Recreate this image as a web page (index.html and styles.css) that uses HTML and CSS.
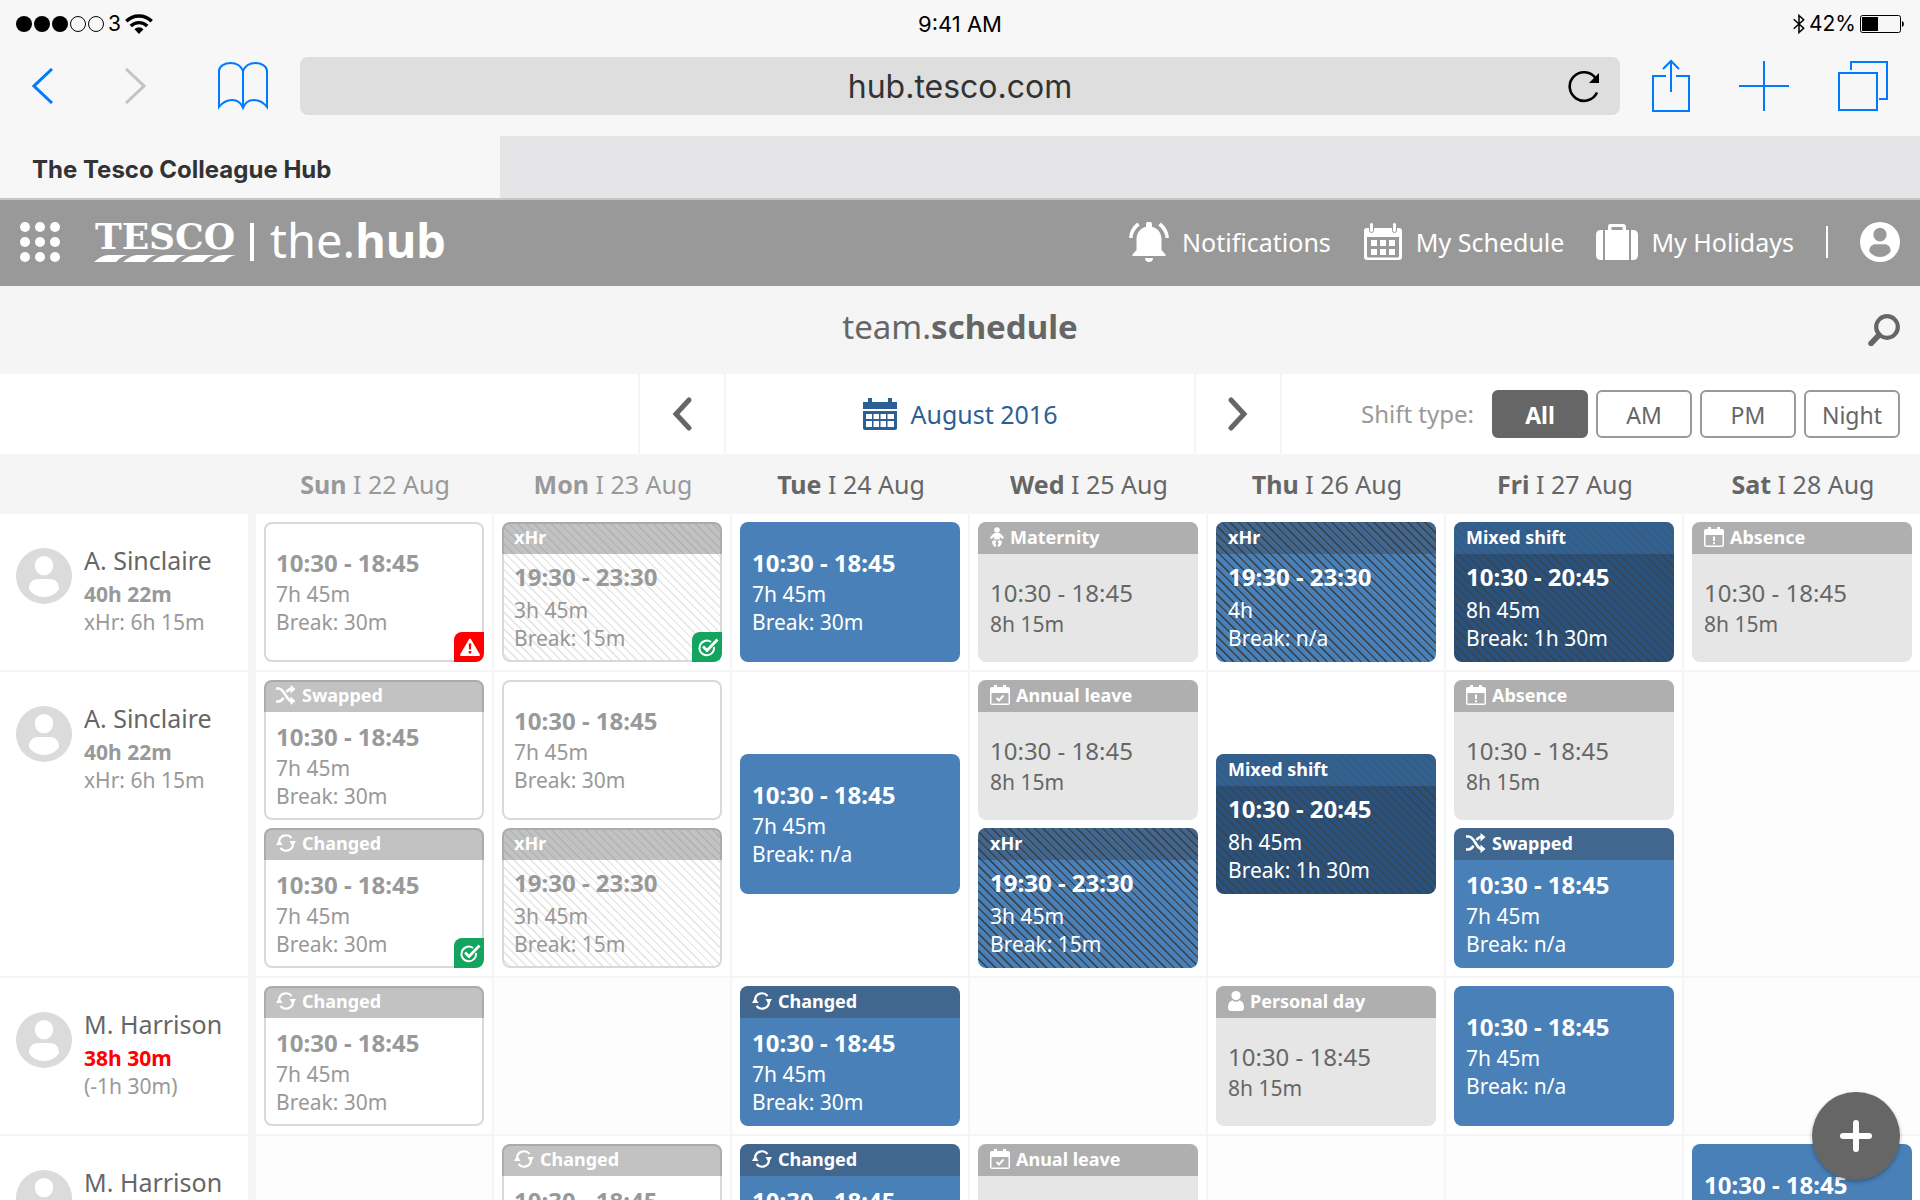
FILE: index.html
```html
<!DOCTYPE html>
<html lang="en">
<head>
<meta charset="utf-8">
<meta name="viewport" content="width=device-width, initial-scale=1">
<title>The Tesco Colleague Hub</title>
<link rel="stylesheet" href="styles.css">
</head>
<body>
<svg class="sprite" aria-hidden="true">
  <symbol id="i-avatar" viewBox="0 0 56 56"><path fill-rule="evenodd" fill="currentColor" d="M28 0a28 28 0 1 0 0 56a28 28 0 0 0 0-56zM28 8a9.3 9.6 0 1 1 0 19.200a9.300 9.600 0 0 1 0-19.200zM13 41c0-7 4-10 9-10h12c5 0 9 3 9 10c-3 5-9 8-15 8s-12-3-15-8z"/></symbol>
  <symbol id="i-swap" viewBox="0 0 20 20"><path fill="none" stroke="currentColor" stroke-width="2.600" d="M0 3.500h2.500c3 0 5 3 7 6.500s4 6 6.500 6M0 16.500h2.500c2 0 3.600-1.500 5-3.700M10.500 7c1.500-2 3-3.200 5.500-3.200"/><path fill="currentColor" d="M14.500 0l5 4l-5 4.500zM14.500 11.500l5 4.500l-5 4z"/></symbol>
  <symbol id="i-change" viewBox="0 0 20 20"><path fill="none" stroke="currentColor" stroke-width="2.200" d="M3 9a7 7 0 0 1 12.500-4M17 11a7 7 0 0 1-12.500 4"/><path fill="currentColor" d="M0 12L3.200 6.500l3.300 5.500zM20 8L16.800 13.500l-3.300-5.500z"/></symbol>
  <symbol id="i-check-day" viewBox="0 0 20 20"><path fill-rule="evenodd" fill="currentColor" d="M4 0h3v2h6V0h3v2h2a2 2 0 0 1 2 2v14a2 2 0 0 1-2 2H2a2 2 0 0 1-2-2V4a2 2 0 0 1 2-2h2zM1.500 8v10q0 .5.5.5h16q.5 0 .5-.5V8z"/><path fill="none" stroke="currentColor" stroke-width="2" d="M6.500 13l2.500 2.500l4.500-5"/></symbol>
  <symbol id="i-absent-day" viewBox="0 0 20 20"><path fill-rule="evenodd" fill="currentColor" d="M4 0h3v2h6V0h3v2h2a2 2 0 0 1 2 2v14a2 2 0 0 1-2 2H2a2 2 0 0 1-2-2V4a2 2 0 0 1 2-2h2zM1.500 8v10q0 .5.5.5h16q.5 0 .5-.5V8z"/><path fill="currentColor" d="M9 9.500h2v4.500H9zM9 15.200h2v2H9z"/></symbol>
  <symbol id="i-baby" viewBox="0 0 14 20"><circle cx="7" cy="3" r="2.800" fill="currentColor"/><path fill="currentColor" d="M4.500 6h5c2 1 3.500 3 4.500 5l-1.500 1l-2.700-2.300V12.500H4.200V9.700L1.500 12L0 11c1-2 2.500-4 4.500-5zM2 14.500l2.500-1.500l2 1.500l-1.300 1.800l1.300 2.200l-1.300 1.500c-2-1-3-3.500-3.200-5.500zM12 14.500l-2.500-1.500l-2 1.500l1.300 1.800l-1.300 2.200l1.300 1.500c2-1 3-3.500 3.200-5.500z"/></symbol>
  <symbol id="i-person" viewBox="0 0 16 20"><circle cx="8" cy="4.600" r="4.600" fill="currentColor"/><path fill="currentColor" d="M4.500 9.300c2 2 5 2 7 0c3 1 4.500 3.500 4.500 7.200q0 3.500-3.500 3.500h-9Q0 20 0 16.500c0-3.700 1.500-6.200 4.500-7.200z"/></symbol>
  <symbol id="i-tick" viewBox="0 0 30 30"><path fill="none" stroke="#fff" stroke-width="2" d="M22 15a7.300 7.300 0 1 1-3-5"/><path fill="none" stroke="#fff" stroke-width="2.800" d="M11 14.500l4 4L25.500 7.500"/></symbol>
  <symbol id="i-warn" viewBox="0 0 30 30"><path fill="#fff" stroke="#fff" stroke-width="2" stroke-linejoin="round" d="M16 7.500L25 23H7z"/><path fill="red" d="M14.700 11.500h2.600l-.4 6h-1.800zM14.700 19h2.600v2.500h-2.600z"/></symbol>
</svg>

<div class="device">
  <div class="status">
    <div class="status-side">
      <svg width="88" height="18" viewBox="0 0 88 18" aria-hidden="true"><circle cx="8" cy="9" r="8"/><circle cx="26" cy="9" r="8"/><circle cx="44" cy="9" r="8"/><circle cx="62" cy="9" r="7.500" fill="none" stroke="#000"/><circle cx="80" cy="9" r="7.500" fill="none" stroke="#000"/></svg>
      <span>3</span>
      <svg width="28" height="20" viewBox="0 0 28 20" aria-hidden="true"><g fill="none" stroke="#000" stroke-width="3.400"><path d="M1.300 7.300a18 18 0 0 1 25.400 0"/><path d="M5.800 12a11.600 11.600 0 0 1 16.400 0"/></g><path d="M9.500 15.200a6.400 6.400 0 0 1 9 0L14 20z"/></svg>
    </div>
    <time>9:41 AM</time>
    <div class="status-side status-right">
      <svg width="12" height="20" viewBox="0 0 12 20" aria-hidden="true"><path fill="none" stroke="#000" stroke-width="1.500" d="M.7 5.200l10 9L6 18.500v-17l4.700 4.300l-10 9"/></svg>
      <span>42%</span>
      <svg width="44" height="18" viewBox="0 0 44 18" aria-hidden="true"><rect x=".5" y=".5" width="40" height="17" rx="2" fill="none" stroke="#000"/><rect x="2" y="2" width="16" height="14"/><path d="M42 6c2.500 1 2.500 5 0 6z"/></svg>
    </div>
  </div>

  <div class="browser">
    <button class="tool back" aria-label="Back"><svg width="22" height="36" viewBox="0 0 22 36"><path d="M20 1L2 18l18 17"/></svg></button>
    <button class="tool forward" aria-label="Forward"><svg width="22" height="36" viewBox="0 0 22 36"><path d="M2 1l18 17L2 35"/></svg></button>
    <button class="tool book" aria-label="Bookmarks"><svg width="50" height="48" viewBox="0 0 50 48"><path d="M25 46V9C23 4 18 1 12.500 1S1 4 1 9v36c7-9 20-10 24 1c4-11 17-10 24-1V9c0-5-6-8-11.500-8S27 4 25 9"/></svg></button>
    <div class="address">
      <input type="text" aria-label="Address" value="hub.tesco.com">
      <button class="reload" aria-label="Reload"><svg width="34" height="34" viewBox="0 0 34 34"><path fill="none" stroke="#000" stroke-width="2.600" d="M30 23.500A14.300 14.300 0 1 1 28.500 9"/><path d="M32 4v10H22z"/></svg></button>
    </div>
    <button class="tool share" aria-label="Share"><svg width="38" height="54" viewBox="0 0 38 54"><path d="M14 17H1v35h36V17H24M19 33V2M11 10l8-8l8 8"/></svg></button>
    <button class="tool new" aria-label="New tab"><svg width="50" height="50" viewBox="0 0 50 50"><path d="M25 0v50M0 25h50"/></svg></button>
    <button class="tool pages" aria-label="Show tabs"><svg width="50" height="50" viewBox="0 0 50 50"><path d="M1 12h38v37H1zM13 9V1h36v37h-8"/></svg></button>
  </div>

  <div class="tabs"><a class="tab" href="#">The Tesco Colleague Hub</a></div>

  <header class="hub">
    <button class="plain" aria-label="Apps"><svg width="40" height="40" viewBox="0 0 40 40" fill="#fff"><circle cx="5" cy="5" r="5"/><circle cx="20" cy="5" r="5"/><circle cx="35" cy="5" r="5"/><circle cx="5" cy="20" r="5"/><circle cx="20" cy="20" r="5"/><circle cx="35" cy="20" r="5"/><circle cx="5" cy="35" r="5"/><circle cx="20" cy="35" r="5"/><circle cx="35" cy="35" r="5"/></svg></button>
    <a class="brand" href="#">
      <span class="tesco"><span>TESCO</span><svg width="142" height="7" viewBox="0 0 142 7" fill="#fff" aria-hidden="true"><path d="M0 7Q8 0 14 0h20q-7 1-12 7zM29 7q8-7 14-7h20q-7 1-12 7zM58 7q8-7 14-7h20q-7 1-12 7zM87 7q8-7 14-7h20q-7 1-12 7zM115 7q8-7 14-7h13q-7 1-12 7z"/></svg></span>
      <span class="bar"></span>
      <span class="hubname">the.<b>hub</b></span>
    </a>
    <nav>
      <a href="#"><svg width="40" height="40" viewBox="0 0 40 40" fill="#fff"><path d="M17 2.500a3 3 0 0 1 6 0v2.300c6 1.500 9.500 6.500 9.500 12.700V28l4 4.500V34h-33v-1.500l4-4.500V17.500C7.500 11.300 11 6.300 17 4.800zM16 36h8a4 4 0 0 1-8 0z"/><path fill="none" stroke="#fff" stroke-width="3.500" d="M9.500 2C5 5.500 2 10 1.800 16M30.500 2C35 5.500 38 10 38.200 16"/></svg>Notifications</a>
      <a href="#"><svg width="40" height="40" viewBox="0 0 40 40" fill="#fff"><path fill-rule="evenodd" d="M4 6h32q3 0 3 3v26q0 3-3 3H4q-3 0-3-3V9q0-3 3-3zM4 15v19q0 1.500 1.500 1.500h29q1.500 0 1.500-1.500V15z"/><path d="M8 18h6v6H8zM17 18h6v6h-6zM26 18h6v6h-6zM8 27h6v6H8zM17 27h6v6h-6zM26 27h6v6h-6z"/><g stroke="#999" stroke-width="1"><rect x="6.500" y=".5" width="4" height="10" rx="2"/><rect x="29.500" y=".5" width="4" height="10" rx="2"/></g></svg>My Schedule</a>
      <a href="#"><svg width="42" height="40" viewBox="0 0 42 40" fill="#fff"><path fill-rule="evenodd" d="M14 2h13q3 0 3 3v3h3v30H9V8h3V5q0-3 2-3zM15.500 5v3h11V5z"/><path d="M7 8v30H5q-5 0-5-5V13q0-5 5-5zM35 8v30h2q5 0 5-5V13q0-5-5-5z"/></svg>My Holidays</a>
      <span class="rule"></span>
      <a href="#" aria-label="Profile"><svg width="40" height="40"><use href="#i-avatar"/></svg></a>
    </nav>
  </header>

  <div class="title">
    <h1>team.<b>schedule</b></h1>
    <button class="plain" aria-label="Search"><svg width="32" height="32" viewBox="0 0 32 32" fill="none" stroke="#666"><circle cx="19" cy="13" r="10.800" stroke-width="4.200"/><path stroke-width="5.500" stroke-linecap="round" d="M3 29.500l8-8.500"/></svg></button>
  </div>

  <div class="controls">
    <div class="month">
      <button class="arrow" aria-label="Previous month"><svg width="22" height="34" viewBox="0 0 22 34"><path d="M18 3L5 17l13 14"/></svg></button>
      <button class="pick"><svg width="34" height="32" viewBox="0 0 34 32" fill="#2d5f97" aria-hidden="true"><path d="M5 0h4v4h16V0h4v4h5v7H0V4h5z"/><path fill-rule="evenodd" d="M0 13h34v17q0 2-2 2H2q-2 0-2-2zM3 16v5h6v-5zM10.500 16v5H16v-5zM17.500 16v5H23v-5zM24.500 16v5H31v-5zM3 23v6h6v-6zM10.500 23v6H16v-6zM17.500 23v6H23v-6zM24.500 23v6H31v-6z"/></svg>August 2016</button>
      <button class="arrow" aria-label="Next month"><svg width="22" height="34" viewBox="0 0 22 34"><path d="M4 3l13 14L4 31"/></svg></button>
    </div>
    <div class="filter">
      <span>Shift type:</span>
      <button class="chip on">All</button>
      <button class="chip">AM</button>
      <button class="chip">PM</button>
      <button class="chip">Night</button>
    </div>
  </div>

  <main class="board">
    <table>
      <thead>
        <tr>
          <th class="who" aria-label="Colleague"></th>
          <th class="past"><b>Sun</b> I 22 Aug</th>
          <th class="past"><b>Mon</b> I 23 Aug</th>
          <th><b>Tue</b> I 24 Aug</th>
          <th><b>Wed</b> I 25 Aug</th>
          <th><b>Thu</b> I 26 Aug</th>
          <th><b>Fri</b> I 27 Aug</th>
          <th><b>Sat</b> I 28 Aug</th>
        </tr>
      </thead>
      <tbody>
        <tr>
          <th class="who" scope="row"><div class="person"><svg class="avatar"><use href="#i-avatar"/></svg><div><p class="name">A. Sinclaire</p><p class="hours">40h 22m</p><p>xHr: 6h 15m</p></div></div></th>
          <td><div class="card done"><div class="body"><p class="time">10:30 - 18:45</p><p>7h 45m</p><p>Break: 30m</p></div><svg class="badge alert"><use href="#i-warn"/></svg></div></td>
          <td><div class="card done striped"><div class="head">xHr</div><div class="body"><p class="time">19:30 - 23:30</p><p>3h 45m</p><p>Break: 15m</p></div><svg class="badge ok"><use href="#i-tick"/></svg></div></td>
          <td><div class="card work"><div class="body"><p class="time">10:30 - 18:45</p><p>7h 45m</p><p>Break: 30m</p></div></div></td>
          <td><div class="card off"><div class="head"><svg class="slim"><use href="#i-baby"/></svg>Maternity</div><div class="body"><p class="time">10:30 - 18:45</p><p>8h 15m</p></div></div></td>
          <td><div class="card work striped"><div class="head">xHr</div><div class="body"><p class="time">19:30 - 23:30</p><p>4h</p><p>Break: n/a</p></div></div></td>
          <td><div class="card mixed striped"><div class="head">Mixed shift</div><div class="body"><p class="time">10:30 - 20:45</p><p>8h 45m</p><p>Break: 1h 30m</p></div></div></td>
          <td><div class="card off"><div class="head"><svg><use href="#i-absent-day"/></svg>Absence</div><div class="body"><p class="time">10:30 - 18:45</p><p>8h 15m</p></div></div></td>
        </tr>
        <tr>
          <th class="who" scope="row"><div class="person"><svg class="avatar"><use href="#i-avatar"/></svg><div><p class="name">A. Sinclaire</p><p class="hours">40h 22m</p><p>xHr: 6h 15m</p></div></div></th>
          <td><div class="card done"><div class="head"><svg><use href="#i-swap"/></svg>Swapped</div><div class="body"><p class="time">10:30 - 18:45</p><p>7h 45m</p><p>Break: 30m</p></div></div>
              <div class="card done"><div class="head"><svg><use href="#i-change"/></svg>Changed</div><div class="body"><p class="time">10:30 - 18:45</p><p>7h 45m</p><p>Break: 30m</p></div><svg class="badge ok"><use href="#i-tick"/></svg></div></td>
          <td><div class="card done"><div class="body"><p class="time">10:30 - 18:45</p><p>7h 45m</p><p>Break: 30m</p></div></div>
              <div class="card done striped"><div class="head">xHr</div><div class="body"><p class="time">19:30 - 23:30</p><p>3h 45m</p><p>Break: 15m</p></div></div></td>
          <td><div class="card work"><div class="body"><p class="time">10:30 - 18:45</p><p>7h 45m</p><p>Break: n/a</p></div></div></td>
          <td><div class="card off"><div class="head"><svg><use href="#i-check-day"/></svg>Annual leave</div><div class="body"><p class="time">10:30 - 18:45</p><p>8h 15m</p></div></div>
              <div class="card work striped"><div class="head">xHr</div><div class="body"><p class="time">19:30 - 23:30</p><p>3h 45m</p><p>Break: 15m</p></div></div></td>
          <td><div class="card mixed striped"><div class="head">Mixed shift</div><div class="body"><p class="time">10:30 - 20:45</p><p>8h 45m</p><p>Break: 1h 30m</p></div></div></td>
          <td><div class="card off"><div class="head"><svg><use href="#i-absent-day"/></svg>Absence</div><div class="body"><p class="time">10:30 - 18:45</p><p>8h 15m</p></div></div>
              <div class="card work"><div class="head"><svg><use href="#i-swap"/></svg>Swapped</div><div class="body"><p class="time">10:30 - 18:45</p><p>7h 45m</p><p>Break: n/a</p></div></div></td>
          <td class="empty"></td>
        </tr>
        <tr>
          <th class="who" scope="row"><div class="person"><svg class="avatar"><use href="#i-avatar"/></svg><div><p class="name">M. Harrison</p><p class="hours short">38h 30m</p><p>(-1h 30m)</p></div></div></th>
          <td><div class="card done"><div class="head"><svg><use href="#i-change"/></svg>Changed</div><div class="body"><p class="time">10:30 - 18:45</p><p>7h 45m</p><p>Break: 30m</p></div></div></td>
          <td class="empty"></td>
          <td><div class="card work"><div class="head"><svg><use href="#i-change"/></svg>Changed</div><div class="body"><p class="time">10:30 - 18:45</p><p>7h 45m</p><p>Break: 30m</p></div></div></td>
          <td class="empty"></td>
          <td><div class="card off"><div class="head"><svg class="mid"><use href="#i-person"/></svg>Personal day</div><div class="body"><p class="time">10:30 - 18:45</p><p>8h 15m</p></div></div></td>
          <td><div class="card work"><div class="body"><p class="time">10:30 - 18:45</p><p>7h 45m</p><p>Break: n/a</p></div></div></td>
          <td class="empty"></td>
        </tr>
        <tr>
          <th class="who" scope="row"><div class="person"><svg class="avatar"><use href="#i-avatar"/></svg><div><p class="name">M. Harrison</p></div></div></th>
          <td class="empty"></td>
          <td><div class="card done"><div class="head"><svg><use href="#i-change"/></svg>Changed</div><div class="body"><p class="time">10:30 - 18:45</p><p>7h 45m</p><p>Break: 30m</p></div></div></td>
          <td><div class="card work"><div class="head"><svg><use href="#i-change"/></svg>Changed</div><div class="body"><p class="time">10:30 - 18:45</p><p>7h 45m</p><p>Break: 30m</p></div></div></td>
          <td><div class="card off"><div class="head"><svg><use href="#i-check-day"/></svg>Anual leave</div><div class="body"><p class="time">10:30 - 18:45</p><p>8h 15m</p></div></div></td>
          <td class="empty"></td>
          <td class="empty"></td>
          <td><div class="card work"><div class="body"><p class="time">10:30 - 18:45</p><p>7h 45m</p><p>Break: 30m</p></div></div></td>
        </tr>
      </tbody>
    </table>
  </main>
  <button class="fab" aria-label="Add shift"><svg width="32" height="32" viewBox="0 0 32 32"><path fill="none" stroke="#fff" stroke-width="6" stroke-linecap="round" d="M16 3v26M3 16h26"/></svg></button>
</div>
</body>
</html>
```
FILE: styles.css
```css
* { box-sizing: border-box; }
body { margin: 0; background: #fff; color: #666; font-family: "Noto Sans", sans-serif; font-size: 21px; line-height: 28px; }
p, h1 { margin: 0; font-weight: 400; }
button { border: 0; background: none; padding: 0; font: inherit; color: inherit; cursor: pointer; }
button svg, a svg { display: block; }
a { color: inherit; text-decoration: none; }
.sprite { display: none; }
.device { display: flex; flex-direction: column; height: 100vh; overflow: hidden; }
.device > * { flex: none; }

/* tablet chrome */
.status, .browser, .tabs { font-family: Inter, sans-serif; background: #f7f7f7; }
.status { display: grid; grid-template-columns: 1fr auto 1fr; align-items: center; height: 48px; padding: 0 16px; color: #000; font-size: 22px; }
.status-side { display: flex; align-items: center; gap: 4px; font-size: 21px; }
.status-right { justify-content: flex-end; }
.browser { display: flex; align-items: center; height: 88px; padding: 0 32px 12px; color: #007aff; }
.tool svg { fill: none; stroke: currentColor; stroke-width: 2; }
.back svg, .forward svg { stroke-width: 3; }
.forward { margin-left: 70px; color: #c4c4c4; }
.book { margin-left: 72px; }
.address { flex: 1; display: flex; align-items: center; height: 58px; margin: 0 32px; padding: 0 19px; background: #dedede; border-radius: 8px; }
.address input { flex: 1; min-width: 0; padding: 2px 0 0 34px; border: 0; background: none; text-align: center; font: 32px/40px Inter, sans-serif; color: #333; }
.new, .pages { margin-left: 49px; }
.tabs { display: flex; height: 64px; background: #e5e5e7; border-bottom: 2px solid #c7c7c8; }
.tab { display: flex; align-items: center; width: 500px; padding: 6px 32px 0; background: #f7f7f7; color: #333; font-size: 24px; font-weight: 700; }

/* hub header */
.hub { display: flex; align-items: center; height: 86px; padding: 0 20px 2px; background: #999; color: #fff; font-size: 25px; }
.brand { display: flex; align-items: center; gap: 14px; margin-left: 34px; }
.tesco { display: grid; gap: 6px; justify-items: center; font: 700 36px/26px "DejaVu Serif", serif; }
.bar { width: 4px; height: 38px; background: #fff; }
.hubname { margin-left: 2px; font-size: 47px; line-height: 62px; padding-bottom: 4px; }
.hub nav { display: flex; align-items: center; gap: 32px; margin-left: auto; }
.hub nav a { display: flex; align-items: center; gap: 13px; }
.rule { width: 2px; height: 32px; background: #fff; }

.title { display: grid; grid-template-columns: 1fr auto 1fr; align-items: center; height: 88px; padding: 0 20px; background: #f5f5f5; }
.title h1 { grid-column: 2; font-size: 33px; line-height: 44px; padding-bottom: 6px; }
.title button { justify-self: end; }

.controls { display: grid; grid-template-columns: 1fr auto 1fr; height: 80px; }
.month { grid-column: 2; display: flex; border: solid #f5f5f5; border-width: 0 2px; }
.arrow { display: grid; place-items: center; width: 84px; }
.arrow svg { fill: none; stroke: #666; stroke-width: 5; stroke-linecap: round; }
.pick { display: flex; align-items: center; justify-content: center; gap: 14px; width: 472px; border: solid #f5f5f5; border-width: 0 2px; color: #2d5f97; font-size: 25px; }
.filter { display: flex; align-items: center; justify-content: flex-end; gap: 8px; padding-right: 20px; color: #999; font-size: 24px; }
.filter span { margin-right: 10px; }
.chip { width: 96px; height: 48px; padding-top: 2px; border: 2px solid #999; border-radius: 6px; color: #666; font-size: 23px; }
.chip.on { background: #666; border-color: #666; color: #fff; font-weight: 700; }

/* schedule grid: the last column's rule falls outside the board */
.board { flex: 1 1 0 !important; min-height: 0; overflow: hidden auto; scrollbar-width: none; }
table { width: calc(100% + 2px); table-layout: fixed; border-collapse: separate; border-spacing: 0; }
th { padding: 0; font-weight: 400; text-align: center; }
thead th { height: 60px; background: #f5f5f5; font-size: 25px; color: #666; }
thead .past { color: #999; }
.who { width: 256px; }
tbody th { border-right: 8px solid #f5f5f5; border-bottom: 2px solid #f5f5f5; text-align: left; vertical-align: top; color: #999; }
td { padding: 8px; border: solid #f5f5f5; border-width: 0 2px 2px 0; vertical-align: middle; }
.empty { background: #fdfdfd; }
.person { display: flex; gap: 12px; padding: 28px 0 0 16px; }
.avatar { width: 56px; height: 56px; margin-top: 6px; color: #dbdbdb; }
.name { margin-bottom: 2px; font-size: 25px; line-height: 36px; color: #666; }
.hours { font-weight: 700; }
.short { color: #f00; }

.card { position: relative; display: flex; flex-direction: column; height: 140px; border-radius: 8px; overflow: hidden; color: #fff; }
.card + .card { margin-top: 8px; }
.head { display: flex; align-items: center; gap: 6px; height: 32px; padding: 0 12px 2px; font-size: 18px; font-weight: 700; color: #fff; }
.head svg { width: 20px; height: 20px; }
.head .mid { width: 16px; }
.head .slim { width: 14px; }
.body { flex: 1; display: flex; flex-direction: column; justify-content: center; padding: 0 12px; }
.time { margin-bottom: 2px; font-size: 24px; line-height: 30px; font-weight: 700; }
.done { background-color: #fff; box-shadow: inset 0 0 0 2px #d9d9d9; color: #999; }
.done .head { background: rgba(102, 102, 102, .4); }
.work { background-color: #4a80b8; }
.work .head { background: rgba(56, 65, 81, .4); }
.mixed { background-color: #28517d; }
.mixed .head { background: rgba(58, 112, 168, .5); }
.off { background-color: #e6e6e6; color: #666; }
.off .head { background: #afafaf; }
.off .time { font-weight: 400; }
.striped { background-image: repeating-linear-gradient(45deg, #3b444c 0, #3b444c 1px, transparent 2px, transparent 6px); }
.done.striped { background-image: repeating-linear-gradient(45deg, #e6e6e6 0, #e6e6e6 1px, transparent 2px, transparent 6px); }
.striped .body { padding-bottom: 2px; }
.striped .time { margin-bottom: 4px; }
.badge { position: absolute; right: 0; bottom: 0; width: 30px; height: 30px; border-radius: 8px 0 8px 0; }
.alert { background: #f00; }
.ok { background: #13a55f; }

.fab { position: fixed; right: 20px; bottom: 20px; display: grid; place-items: center; width: 88px; height: 88px; border-radius: 50%; background: #666; box-shadow: 0 2px 4px rgba(0, 0, 0, .3); }
```
